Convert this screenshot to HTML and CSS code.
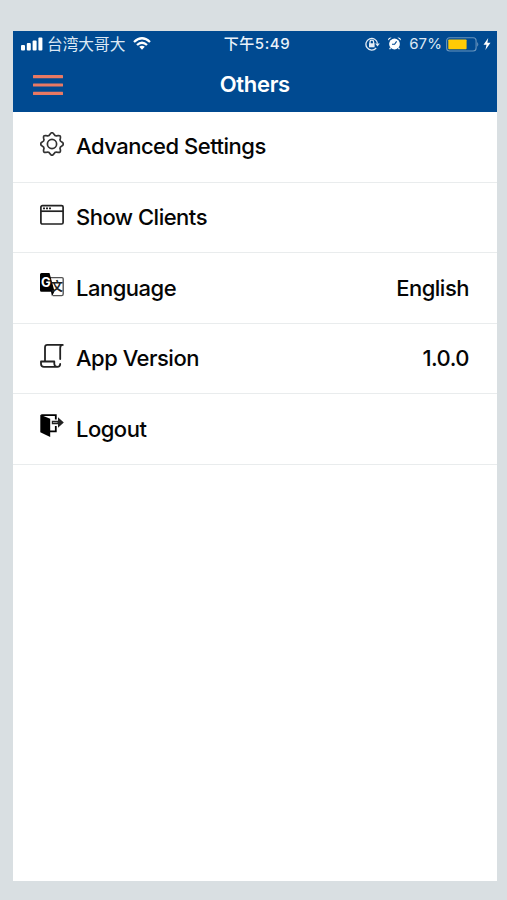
FILE: index.html
```html
<!DOCTYPE html>
<html lang="en">
<head>
<meta charset="utf-8">
<title>Others</title>
<link rel="stylesheet" href="styles.css">
</head>
<body>
<main class="phone">
  <header class="header">
    <div class="status">
      <div class="status-left">
        <svg class="signal" viewBox="0 0 22 14" fill="#fff"><rect x="0" y="8" width="4" height="5.5" rx="1"/><rect x="5.8" y="6" width="4" height="7.5" rx="1"/><rect x="11.6" y="3.5" width="4" height="10" rx="1"/><rect x="17.4" y="0.5" width="4" height="13" rx="1"/></svg>
        <span class="carrier">台湾大哥大</span>
        <svg class="wifi" viewBox="0 0 18 13" fill="none" stroke="#fff" stroke-width="2.3"><path d="M1 5Q9-2.4 17 5M4 8Q9 3.4 14 8"/><path d="M6.2 9.8Q9 7.6 11.8 9.8L9 12.7Z" fill="#fff" stroke="none"/></svg>
      </div>
      <span class="time">下午5:49</span>
      <div class="status-right">
        <svg class="lock" viewBox="0 0 15 14" fill="none" stroke="#e5edf6" stroke-width="1.3"><path d="M11.2 11A5.8 5.8 0 1 1 12.5 6.5"/><path d="M10.2 6.4h4.6l-2.3 3z" fill="#e5edf6" stroke="none"/><path d="M5 7V5a1.8 1.8 0 0 1 3.6 0v2"/><rect x="4" y="6.3" width="5.6" height="4" fill="#e5edf6" stroke="none"/></svg>
        <svg class="alarm" viewBox="0 0 13 13" fill="#fff"><circle cx="6.5" cy="7" r="5.4"/><path d="M0 3.6Q0 .3 3.6.6ZM13 3.6Q13 .3 9.4.6Z"/><path d="M2.6 10.6l-1 1.6M10.4 10.6l1 1.6" stroke="#fff" stroke-width="1.2"/><path d="M8.6 4.4 6.6 7.3H4" fill="none" stroke="#004a91" stroke-width="1.1"/></svg>
        <span class="percent">67%</span>
        <svg class="battery" viewBox="0 0 34 15"><rect x=".6" y=".8" width="29.5" height="13.2" rx="3" fill="none" stroke="#6794bd" stroke-width="1.1"/><rect x="2.3" y="2.5" width="18.3" height="9.8" rx=".8" fill="#ffcb05"/><path d="M31.2 5q2.2 2.4 0 4.8z" fill="#6794bd"/></svg>
        <svg class="bolt" viewBox="0 0 8 12" fill="#fff"><path d="M5.2 0 .5 6.7h3L2.4 12 7.5 4.8H4.4z"/></svg>
      </div>
    </div>
    <div class="nav">
      <svg class="menu" viewBox="0 0 30 20" fill="#e87963"><rect width="30" height="3.2" rx=".5"/><rect y="8.4" width="30" height="3.2" rx=".5"/><rect y="16.8" width="30" height="3.2" rx=".5"/></svg>
      <h1>Others</h1>
    </div>
  </header>
  <ul class="list">
    <li>
      <svg class="icon" viewBox="-12 -12 24 24" fill="none" stroke="#333" stroke-width="1.7"><path d="M9.81-1.95Q12.9 0 9.81 1.95Q7.3 3.02 8.31 5.56Q9.12 9.12 5.56 8.31Q3.02 7.3 1.95 9.81Q0 12.9-1.95 9.81Q-3.02 7.3-5.56 8.31Q-9.12 9.12-8.31 5.56Q-7.3 3.02-9.81 1.95Q-12.9 0-9.81-1.95Q-7.3-3.02-8.31-5.56Q-9.12-9.12-5.56-8.31Q-3.02-7.3-1.95-9.81Q0-12.9 1.95-9.81Q3.02-7.3 5.56-8.31Q9.12-9.12 8.31-5.56Q7.3-3.02 9.81-1.95Z"/><circle r="4.6"/></svg>
      <span>Advanced Settings</span>
    </li>
    <li>
      <svg class="icon" viewBox="0 0 24 24" fill="none" stroke="#222" stroke-width="1.7"><rect x=".9" y="2.6" width="22.2" height="18.4" rx="1.5"/><path d="M1 8.2h22"/><path d="M3 5.4h8" stroke-width="1.8" stroke-dasharray="2 1"/></svg>
      <span>Show Clients</span>
    </li>
    <li>
      <svg class="icon" viewBox="0 0 24 24"><path d="M10 4.6h12a1.2 1.2 0 0 1 1.2 1.2V21a1.6 1.6 0 0 1-1.6 1.6H13" fill="#fff" stroke="#555" stroke-width="1.4"/><path d="M1.5 0H9.5L14.5 18.3 12 23.5 11 18.8H1.5A1.5 1.5 0 0 1 0 17.3V1.5A1.5 1.5 0 0 1 1.5 0z" fill="#000"/><text class="g" x="1" y="14">G</text><text class="wen" x="11" y="18">文</text></svg>
      <span>Language</span><span class="value">English</span>
    </li>
    <li>
      <svg class="icon" viewBox="0 0 24 24" fill="none" stroke="#222" stroke-width="1.8" stroke-linecap="round" stroke-linejoin="round"><path d="M5 17V3.2A2.4 2.4 0 0 1 7.4.9H22.8Q20.2 1 20.2 4V15"/><path d="M1 17.5H14.3V20Q14.6 22.9 17.3 22.9H4Q1 22.9 1 19.7ZM17.3 22.9Q20.2 22.7 20.2 20"/></svg>
      <span>App Version</span><span class="value">1.0.0</span>
    </li>
    <li>
      <svg class="icon" viewBox="0 0 24 24"><path d="M1.2 1.2H15.8V5.5M15.8 12V17.3H10" fill="none" stroke="#000" stroke-width="1.8"/><path d="M.3.8 10.2 4.8V23L.3 18.2Z" fill="#000"/><path d="M11.8 6.8H18V3.3L23.8 8.5 18 13.7V10.2H11.8Z" fill="#222"/><path d="M13 8.5h4.5" stroke="#aaa" stroke-width=".8"/></svg>
      <span>Logout</span>
    </li>
  </ul>
</main>
</body>
</html>
```
FILE: styles.css
```css
* { box-sizing: border-box; }
body {
  margin: 0;
  height: 900px;
  padding: 30.5px 10.5px 19px 13px;
  background: #d9dfe2;
  font-family: Inter, "Liberation Sans", "Noto Sans CJK SC", sans-serif;
  color: #050505;
}
svg { display: block; flex: none; }
.phone { height: 850.5px; background: #fff; }
.header { height: 81.5px; background: #004a91; color: #fff; }
.status {
  height: 27px;
  display: grid;
  grid-template-columns: 1fr auto 1fr;
  align-items: center;
  padding: 0 5.5px 0 8px;
  font-size: 15px;
  line-height: 20px;
  white-space: nowrap;
}
.status-left, .status-right { display: flex; align-items: center; }
.status-right { justify-content: flex-end; }
.signal { width: 22px; height: 14px; }
.carrier { margin-left: 4px; font: 15.7px/20px "Noto Sans CJK SC", sans-serif; color: #dce8f4; }
.wifi { width: 18px; height: 13px; margin: -2px 0 0 8px; }
.time { margin-left: 2px; font-weight: 500; letter-spacing: .6px; color: #eaf2fa; }
.lock { width: 15px; height: 14px; margin-right: 8px; }
.alarm { width: 13px; height: 13px; margin: -1px 8px 0 0; }
.percent { color: #dce8f4; letter-spacing: .1px; }
.battery { width: 34px; height: 15px; margin-left: 4px; }
.bolt { width: 8px; height: 12px; margin-left: 3px; }
.nav { height: 52px; display: grid; grid-template-columns: 1fr auto 1fr; align-items: center; }
.menu { width: 30px; height: 20px; margin: 2px 0 0 19.5px; }
h1 { margin: 0; font-size: 22px; line-height: 28px; font-weight: 600; letter-spacing: -.3px; }
.list { list-style: none; margin: 0; padding: 0; }
.list li {
  height: 70.5px;
  display: flex;
  align-items: center;
  padding: 0 27.5px 0 27px;
  border-bottom: 1px solid #e9eced;
  font-size: 22px;
  line-height: 28px;
  font-weight: 500;
  letter-spacing: -.5px;
}
.list li:first-child { padding-bottom: 1px; }
.icon { width: 24px; height: 24px; margin: 0 12px 5px 0; }
.value { margin-left: auto; }
.g { font: 700 13px Inter, sans-serif; letter-spacing: 0; fill: #fff; }
.wen { font: 700 12px "Noto Sans CJK SC", sans-serif; letter-spacing: 0; fill: #222; }
```
